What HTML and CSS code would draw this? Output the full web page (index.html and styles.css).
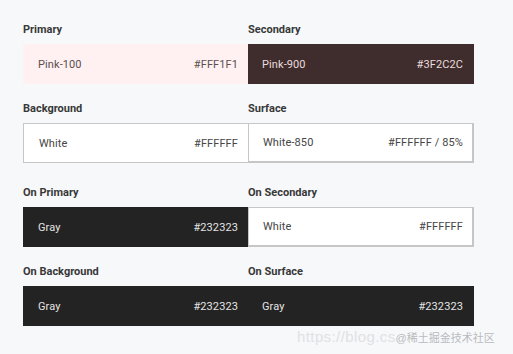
FILE: index.html
```html
<!DOCTYPE html>
<html>
<head>
<meta charset="utf-8">
<link rel="stylesheet" href="styles.css">
</head>
<body>
<div class="page">
  <div class="group">
    <div class="cell">
      <div class="label">Primary</div>
      <div class="swatch pink"><span>Pink-100</span><span>#FFF1F1</span></div>
    </div>
    <div class="cell">
      <div class="label">Secondary</div>
      <div class="swatch brown"><span>Pink-900</span><span>#3F2C2C</span></div>
    </div>
    <div class="cell">
      <div class="label">Background</div>
      <div class="swatch white left"><span>White</span><span>#FFFFFF</span></div>
    </div>
    <div class="cell">
      <div class="label">Surface</div>
      <div class="swatch white right"><span>White-850</span><span>#FFFFFF / 85%</span></div>
    </div>
  </div>
  <div class="group">
    <div class="cell">
      <div class="label">On Primary</div>
      <div class="swatch gray"><span>Gray</span><span>#232323</span></div>
    </div>
    <div class="cell">
      <div class="label">On Secondary</div>
      <div class="swatch white right"><span>White</span><span>#FFFFFF</span></div>
    </div>
    <div class="cell">
      <div class="label">On Background</div>
      <div class="swatch gray"><span>Gray</span><span>#232323</span></div>
    </div>
    <div class="cell">
      <div class="label">On Surface</div>
      <div class="swatch gray"><span>Gray</span><span>#232323</span></div>
    </div>
  </div>
  <div class="watermark"><span class="wm-url">https://blog.cs</span><span class="wm-site">@稀土掘金技术社区</span></div>
</div>
</body>
</html>
```

FILE: styles.css
```css
html, body {
  margin: 0;
  padding: 0;
  background: #f7f8fa;
}
.page {
  position: relative;
  width: 513px;
  height: 354px;
  box-sizing: border-box;
  padding: 23px 0 0 23px;
  font-family: Roboto, "Liberation Sans", sans-serif;
  display: flex;
  flex-direction: column;
  gap: 23px;
}
.group {
  display: grid;
  grid-template-columns: 225px 226px;
  row-gap: 18px;
}
.label {
  font-size: 11px;
  line-height: 14px;
  font-weight: 700;
  color: #383838;
  margin-bottom: 7px;
}
.swatch {
  height: 40px;
  box-sizing: border-box;
  display: flex;
  align-items: center;
  justify-content: space-between;
  padding: 0 10px 0 15px;
  font-size: 11px;
  letter-spacing: 0.1px;
}
.cell:nth-child(2n) .swatch {
  padding: 0 11px 0 14px;
}
.cell:nth-child(2n) .swatch.right {
  padding: 0 9px 0 14px;
}
.pink {
  background: #fff1f1;
  color: #5a4f4f;
}
.brown {
  background: #3f2c2c;
  color: #eadcdc;
}
.gray {
  background: #232323;
  color: #e4e4e4;
}
.white {
  background: #ffffff;
  color: #454545;
  border: 1px solid #c6c6c6;
}
.white.left {
  border-right: none;
}
.white.right {
  border-right: 2px solid #c6c6c6;
  border-bottom: 2px solid #c6c6c6;
}
.watermark {
  position: absolute;
  left: 297px;
  top: 328px;
  line-height: 18px;
  white-space: nowrap;
  font-family: "Liberation Sans", "Noto Sans CJK SC", sans-serif;
}
.wm-url {
  color: #dfe1e5;
  font-size: 15px;
  letter-spacing: 0.4px;
}
.wm-site {
  color: #b9bbc0;
  font-size: 11px;
}
```
